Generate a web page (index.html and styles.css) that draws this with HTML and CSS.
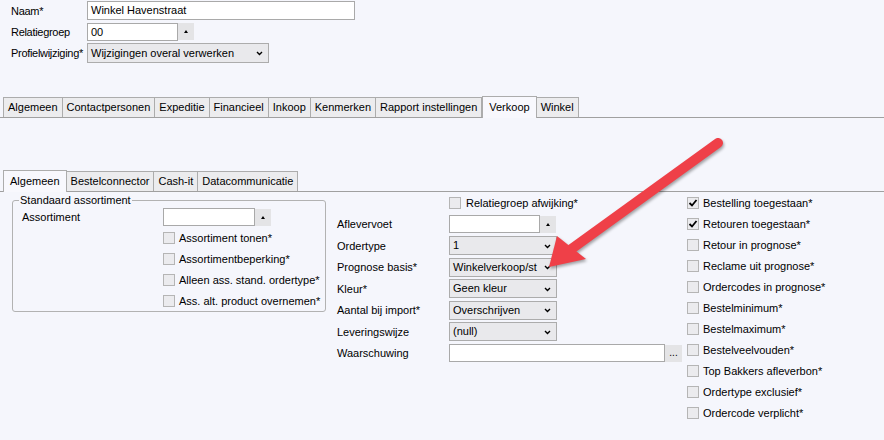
FILE: index.html
```html
<!DOCTYPE html>
<html lang="nl">
<head>
    <meta charset="UTF-8" />
    <title>Winkel Havenstraat</title>
    <link rel="stylesheet" href="styles.css">
</head>
<body>
    <div class="top-form">
        <div class="form-row">
            <span class="lbl">Naam*</span>
            <div class="textbox name-box">Winkel Havenstraat</div>
        </div>
        <div class="form-row">
            <span class="lbl">Relatiegroep</span>
            <div class="textbox group-box">00</div>
            <div class="spin-btn"><span class="up"></span></div>
        </div>
        <div class="form-row">
            <span class="lbl">Profielwijziging*</span>
            <div class="combo profile-combo">Wijzigingen overal verwerken
                <svg class="chev" width="7" height="5" viewBox="0 0 7 5"><path d="M1 1 L3.5 3.5 L6 1" fill="none" stroke="#000" stroke-width="1.4"/></svg>
            </div>
        </div>
    </div>

    <div class="tabs main-tabs">
        <div class="tab">Algemeen</div>
        <div class="tab">Contactpersonen</div>
        <div class="tab">Expeditie</div>
        <div class="tab">Financieel</div>
        <div class="tab">Inkoop</div>
        <div class="tab">Kenmerken</div>
        <div class="tab">Rapport instellingen</div>
        <div class="tab active">Verkoop</div>
        <div class="tab">Winkel</div>
    </div>

    <div class="tabs sub-tabs">
        <div class="tab active">Algemeen</div>
        <div class="tab">Bestelconnector</div>
        <div class="tab">Cash-it</div>
        <div class="tab">Datacommunicatie</div>
    </div>

    <div class="panel">
        <fieldset class="group">
            <legend>Standaard assortiment</legend>
            <div class="field-row">
                <span class="group-lbl">Assortiment</span>
                <div class="textbox lookup-box"></div>
                <div class="spin-btn"><span class="up"></span></div>
            </div>
            <div class="check-list">
                <div class="check-row"><span class="cb"></span>Assortiment tonen*</div>
                <div class="check-row"><span class="cb"></span>Assortimentbeperking*</div>
                <div class="check-row"><span class="cb"></span>Alleen ass. stand. ordertype*</div>
                <div class="check-row"><span class="cb"></span>Ass. alt. product overnemen*</div>
            </div>
        </fieldset>

        <div class="mid-col">
            <div class="mid-row">
                <span class="mid-lbl"></span>
                <span class="cb"></span><span class="cb-text">Relatiegroep afwijking*</span>
            </div>
            <div class="mid-row">
                <span class="mid-lbl">Aflevervoet</span>
                <div class="textbox small-box"></div>
                <div class="spin-btn"><span class="up"></span></div>
            </div>
            <div class="mid-row">
                <span class="mid-lbl">Ordertype</span>
                <div class="combo mid-combo">1
                    <svg class="chev" width="7" height="5" viewBox="0 0 7 5"><path d="M1 1 L3.5 3.5 L6 1" fill="none" stroke="#000" stroke-width="1.4"/></svg>
                </div>
            </div>
            <div class="mid-row">
                <span class="mid-lbl">Prognose basis*</span>
                <div class="combo mid-combo">Winkelverkoop/st
                    <svg class="chev" width="7" height="5" viewBox="0 0 7 5"><path d="M1 1 L3.5 3.5 L6 1" fill="none" stroke="#000" stroke-width="1.4"/></svg>
                </div>
            </div>
            <div class="mid-row">
                <span class="mid-lbl">Kleur*</span>
                <div class="combo mid-combo">Geen kleur
                    <svg class="chev" width="7" height="5" viewBox="0 0 7 5"><path d="M1 1 L3.5 3.5 L6 1" fill="none" stroke="#000" stroke-width="1.4"/></svg>
                </div>
            </div>
            <div class="mid-row">
                <span class="mid-lbl">Aantal bij import*</span>
                <div class="combo mid-combo">Overschrijven
                    <svg class="chev" width="7" height="5" viewBox="0 0 7 5"><path d="M1 1 L3.5 3.5 L6 1" fill="none" stroke="#000" stroke-width="1.4"/></svg>
                </div>
            </div>
            <div class="mid-row">
                <span class="mid-lbl">Leveringswijze</span>
                <div class="combo mid-combo">(null)
                    <svg class="chev" width="7" height="5" viewBox="0 0 7 5"><path d="M1 1 L3.5 3.5 L6 1" fill="none" stroke="#000" stroke-width="1.4"/></svg>
                </div>
            </div>
            <div class="mid-row">
                <span class="mid-lbl">Waarschuwing</span>
                <div class="textbox warn-box"></div>
                <div class="dots-btn">...</div>
            </div>
        </div>

        <div class="right-col">
            <div class="check-row"><span class="cb checked"><svg width="10" height="10" viewBox="0 0 10 10"><path d="M1.5 5 L4 7.5 L8.5 2" fill="none" stroke="#000" stroke-width="1.8"/></svg></span>Bestelling toegestaan*</div>
            <div class="check-row"><span class="cb checked"><svg width="10" height="10" viewBox="0 0 10 10"><path d="M1.5 5 L4 7.5 L8.5 2" fill="none" stroke="#000" stroke-width="1.8"/></svg></span>Retouren toegestaan*</div>
            <div class="check-row"><span class="cb"></span>Retour in prognose*</div>
            <div class="check-row"><span class="cb"></span>Reclame uit prognose*</div>
            <div class="check-row"><span class="cb"></span>Ordercodes in prognose*</div>
            <div class="check-row"><span class="cb"></span>Bestelminimum*</div>
            <div class="check-row"><span class="cb"></span>Bestelmaximum*</div>
            <div class="check-row"><span class="cb"></span>Bestelveelvouden*</div>
            <div class="check-row"><span class="cb"></span>Top Bakkers afleverbon*</div>
            <div class="check-row"><span class="cb"></span>Ordertype exclusief*</div>
            <div class="check-row"><span class="cb"></span>Ordercode verplicht*</div>
        </div>
    </div>

    <!-- rode pijl van de screenshot -->
    <svg class="callout-arrow" width="210" height="150" viewBox="0 0 210 150">
        <line x1="188" y1="15" x2="40" y2="122" stroke="#ef4048" stroke-width="10" stroke-linecap="round"/>
        <polygon points="19,139 27,108 56,131" fill="#ef4048"/>
    </svg>
</body>
</html>
```

FILE: styles.css
```css
* {
    box-sizing: border-box;
}

body {
    margin: 0;
    position: relative;
    width: 884px;
    height: 440px;
    overflow: hidden;
    background-color: #f5f6fc;
    font-family: "Liberation Sans", Arial, sans-serif;
    font-size: 11px;
    color: #000;
}

/* bovenste formulier */
.top-form {
    padding-left: 11px;
}

.form-row {
    display: flex;
    align-items: center;
    height: 21px;
}

.form-row .lbl {
    width: 76px;
    letter-spacing: -0.3px;
    white-space: nowrap;
}

.textbox {
    background-color: #fff;
    border: 1px solid #a9a9a9;
    padding: 0 3px;
    white-space: nowrap;
    overflow: hidden;
}

.name-box {
    width: 268px;
    height: 19px;
    line-height: 17px;
}

.group-box {
    width: 91px;
    height: 18px;
    line-height: 16px;
}

.spin-btn {
    width: 16px;
    height: 17px;
    background-color: #e4e4e6;
    display: flex;
    align-items: center;
    justify-content: center;
}

.spin-btn .up {
    width: 0;
    height: 0;
    border-left: 2.5px solid transparent;
    border-right: 2.5px solid transparent;
    border-bottom: 3px solid #000;
}

.combo {
    position: relative;
    background-color: #e9e9ec;
    border: 1px solid #acacac;
    padding: 0 3px;
    white-space: nowrap;
}

.combo .chev {
    position: absolute;
    right: 5px;
    top: 50%;
    margin-top: -2px;
}

.profile-combo {
    width: 182px;
    height: 20px;
    line-height: 18px;
}

/* tabbladen */
.tabs {
    display: flex;
    align-items: flex-end;
    height: 22px;
    padding-left: 3px;
    border-bottom: 1px solid #a0a0a0;
}

.main-tabs {
    margin-top: 33px;
}

.sub-tabs {
    margin-top: 52px;
}

.tab {
    height: 20px;
    line-height: 19px;
    padding: 0 4px;
    background-color: #ececee;
    border: 1px solid #acacac;
    border-bottom: none;
    white-space: nowrap;
}

.tab + .tab {
    border-left: none;
}

.tab.active {
    position: relative;
    height: 22px;
    line-height: 20px;
    padding: 0 6px;
    margin-bottom: -1px;
    border-left: 1px solid #acacac;
    background-color: #f8f8fd;
}

.tab.active + .tab {
    border-left: none;
}

/* inhoud */
.panel {
    display: flex;
    align-items: flex-start;
    padding-left: 12px;
}

.group {
    width: 314px;
    margin: 2px 0 0 0;
    padding: 1px 0 0 9px;
    border: 1px solid #b2b2b2;
    border-radius: 3px;
    min-width: 0;
}

.group legend {
    margin-left: -3px;
    padding: 0 1px;
    line-height: 13px;
}

.field-row {
    display: flex;
    align-items: center;
    height: 18px;
}

.group-lbl {
    width: 141px;
}

.lookup-box {
    width: 92px;
    height: 18px;
}

.check-list {
    margin-top: 1px;
    padding-left: 141px;
}

.check-row {
    display: flex;
    align-items: center;
    height: 21px;
    white-space: nowrap;
}

.cb {
    width: 12px;
    height: 12px;
    margin-right: 4px;
    flex-shrink: 0;
    background-color: #ebebee;
    border: 1px solid #b5b5b5;
    display: flex;
    align-items: center;
    justify-content: center;
}

.mid-col {
    width: 350px;
    margin-left: 11px;
}

.mid-row {
    display: flex;
    align-items: center;
    height: 21.5px;
}

.mid-lbl {
    width: 112px;
}

.mid-row .cb {
    margin-right: 5px;
}

.small-box {
    width: 91px;
    height: 18px;
}

.mid-combo {
    width: 108px;
    height: 19px;
    line-height: 17px;
}

.warn-box {
    width: 216px;
    height: 18px;
}

.dots-btn {
    width: 17px;
    height: 17px;
    background-color: #e4e4e6;
    text-align: center;
    line-height: 15px;
    font-size: 10px;
}

.right-col {
    display: flex;
    flex-direction: column;
}

.callout-arrow {
    position: absolute;
    left: 530px;
    top: 128px;
    filter: drop-shadow(1px 2px 1.5px rgba(0, 0, 0, 0.35));
}
```
